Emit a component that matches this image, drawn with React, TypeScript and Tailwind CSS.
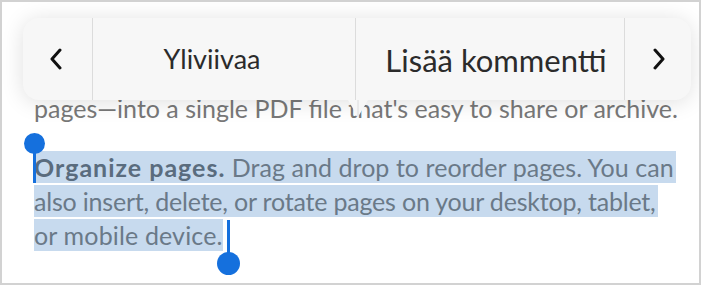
import React from 'react'

const font = { fontFamily: 'Lato, "Open Sans", sans-serif' }

function Chevron({ dir }: { dir: 'left' | 'right' }) {
  return (
    <svg width="14" height="22" viewBox="0 0 14 22" fill="none">
      <polyline
        points={dir === 'left' ? '11,2 3,11 11,20' : '3,2 11,11 3,20'}
        stroke="#111"
        strokeWidth="3"
        strokeLinecap="round"
        strokeLinejoin="round"
      />
    </svg>
  )
}

export default function App() {
  return (
    <div className="w-[701px] h-[285px] bg-white">
      <div
        className="relative w-[701px] h-[285px] border-2 border-[#d2d2d2] overflow-hidden bg-white"
        style={font}
      >
        {/* document text */}
        <div className="pt-[90px] pl-[32px] text-[25px] text-[#787878]">
          <div className="h-[33px] leading-[33px] whitespace-nowrap">
            pages—into a single PDF file that's easy to share or archive.
          </div>
          <div className="mt-[26px] flex flex-col gap-[2px] text-[#6a7988]">
            <div className="flex">
              <span className="h-[32px] leading-[32px] whitespace-nowrap bg-[#c7daee] pr-[2px]">
                <b className="font-bold text-[#5a6c7e] tracking-[1px]">Organize pages.</b>{' '}
                <span className="tracking-[0.05px]">Drag and drop to reorder pages. You can</span>
              </span>
            </div>
            <div className="flex">
              <span className="h-[32px] leading-[32px] whitespace-nowrap bg-[#c7daee] pr-[2px] tracking-[-0.2px]">
                also insert, delete, or rotate pages on your desktop, tablet,
              </span>
            </div>
            <div className="flex">
              <span className="h-[32px] leading-[32px] whitespace-nowrap bg-[#c7daee] tracking-[0.15px]">
                or mobile device.
              </span>
            </div>
          </div>
        </div>

        {/* selection handles */}
        <div className="absolute left-[22px] top-[131px] flex flex-col items-center">
          <div className="w-[21px] h-[21px] rounded-full bg-[#1570dd]" />
          <div className="w-[3px] h-[31px] -mt-[2px] bg-[#1570dd]" />
        </div>
        <div className="absolute left-[215px] top-[218px] flex flex-col items-center">
          <div className="w-[3px] h-[36px] bg-[#1570dd]" />
          <div className="w-[23px] h-[23px] -mt-[4px] rounded-full bg-[#1570dd]" />
        </div>

        {/* context toolbar */}
        <div className="absolute left-[21px] top-[16px]">
          <div className="relative flex w-[668px] h-[82px] rounded-[16px] bg-[#f7f7f7] shadow-[0_2px_22px_rgba(0,0,0,0.13)]">
            <div className="w-[69px] flex items-center justify-center pr-[3px]">
              <Chevron dir="left" />
            </div>
            <div className="w-px bg-[#dcdcdc]" />
            <div className="w-[262px] flex items-center justify-center pt-[1px] pr-[24px] text-[27px] text-[#2b2b2b]">
              Yliviivaa
            </div>
            <div className="w-px bg-[#dcdcdc]" />
            <div className="w-[268px] flex items-center justify-center pt-[2px] pl-[12px] text-[31px] text-[#2b2b2b]">
              Lisää kommentti
            </div>
            <div className="w-px bg-[#dcdcdc]" />
            <div className="flex-1 flex items-center justify-center pl-[2px]">
              <Chevron dir="right" />
            </div>
            <svg className="absolute left-[325px] top-[82px]" width="20" height="18" viewBox="0 0 20 18">
              <polygon points="0,0 20,0 10,17" fill="#f7f7f7" />
              <line x1="10" y1="0" x2="10" y2="17" stroke="#dcdcdc" strokeWidth="1" />
            </svg>
          </div>
        </div>
      </div>
    </div>
  )
}
